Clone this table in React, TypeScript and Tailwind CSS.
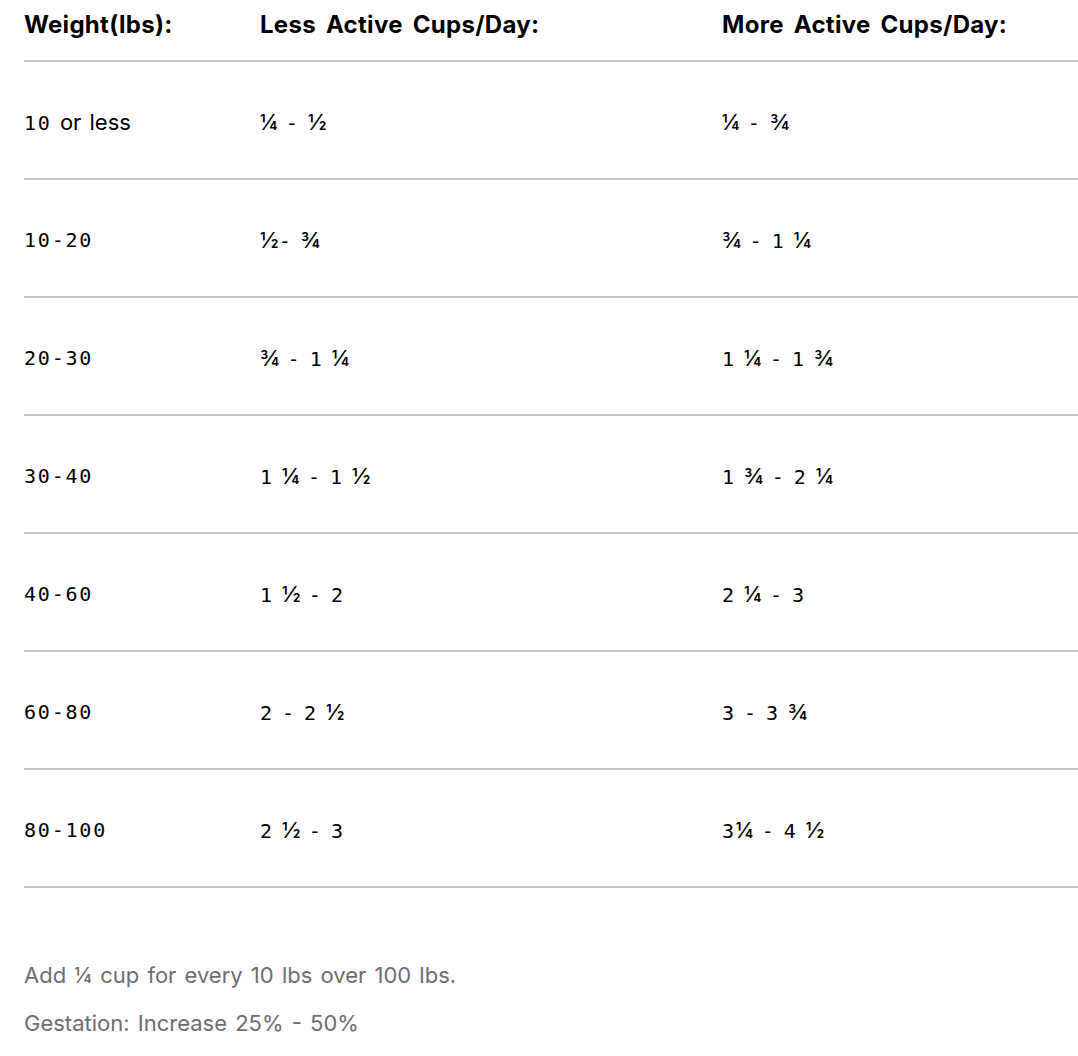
const rows: [string, string, string][] = [
  ['10 or less', '¼ - ½', '¼ - ¾'],
  ['10-20', '½- ¾', '¾ - 1 ¼'],
  ['20-30', '¾ - 1 ¼', '1 ¼ - 1 ¾'],
  ['30-40', '1 ¼ - 1 ½', '1 ¾ - 2 ¼'],
  ['40-60', '1 ½ - 2', '2 ¼ - 3'],
  ['60-80', '2 - 2 ½', '3 - 3 ¾'],
  ['80-100', '2 ½ - 3', '3¼ - 4 ½'],
];

// digits + hyphens render in the mono face, everything else in the sans face
function Mixed({ text }: { text: string }) {
  const parts = text.split(/([0-9-]+)/).filter(Boolean);
  return (
    <>
      {parts.map((p, i) =>
        /^[0-9-]+$/.test(p) ? (
          <span key={i} className="font-['DejaVu_Sans_Mono',monospace] text-[20px] tracking-[1.8px]">{p}</span>
        ) : (
          <span key={i} className="font-['Inter',sans-serif] text-[22px] [word-spacing:2px]">{p}</span>
        )
      )}
    </>
  );
}

export default function App() {
  return (
    <div className="w-full bg-white pl-6 text-black font-['Inter',sans-serif]">
      <div className="grid grid-cols-[236px_462px_1fr] border-b-2 border-[#c4c4c4] pt-[9px] pb-[19px] text-[24px] font-bold leading-8 tracking-[0.3px] [word-spacing:4px]">
        <div>Weight(lbs):</div>
        <div>Less Active Cups/Day:</div>
        <div>More Active Cups/Day:</div>
      </div>
      {rows.map(r => (
        <div key={r[0]} className="grid grid-cols-[236px_462px_1fr] items-center h-[118px] pt-1 border-b-2 border-[#c4c4c4]">
          <div><Mixed text={r[0]} /></div>
          <div><Mixed text={r[1]} /></div>
          <div><Mixed text={r[2]} /></div>
        </div>
      ))}
      <div className="pt-[63px] text-[22px] text-[#6e6e6e] leading-[48px] [word-spacing:2px]">
        <p>Add ¼ cup for every 10 lbs over 100 lbs.</p>
        <p>Gestation: Increase 25% - 50%</p>
      </div>
    </div>
  );
}
